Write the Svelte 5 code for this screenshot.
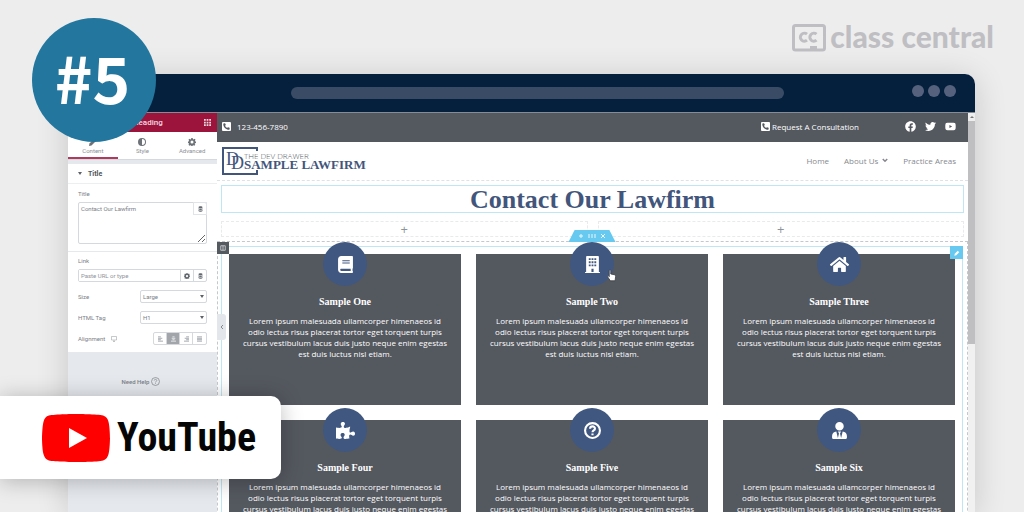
<script>
  const text =
    'Lorem ipsum malesuada ullamcorper himenaeos id odio lectus risus placerat tortor eget torquent turpis cursus vestibulum lacus duis justo neque enim egestas est duis luctus nisl etiam.';
  const cards = [
    { title: 'Sample One', icon: 'book' },
    { title: 'Sample Two', icon: 'building' },
    { title: 'Sample Three', icon: 'home' },
    { title: 'Sample Four', icon: 'puzzle' },
    { title: 'Sample Five', icon: 'question' },
    { title: 'Sample Six', icon: 'user' }
  ];
  const icons = {
    book: ['0 0 448 512', 'M448 360V24c0-13.3-10.7-24-24-24H96C43 0 0 43 0 96v320c0 53 43 96 96 96h328c13.3 0 24-10.7 24-24v-16c0-7.5-3.5-14.3-8.9-18.7-4.2-15.4-4.2-59.3 0-74.7 5.4-4.3 8.9-11.1 8.9-18.6zM128 134c0-3.3 2.7-6 6-6h212c3.3 0 6 2.7 6 6v20c0 3.3-2.7 6-6 6H134c-3.3 0-6-2.7-6-6v-20zm0 64c0-3.3 2.7-6 6-6h212c3.3 0 6 2.7 6 6v20c0 3.3-2.7 6-6 6H134c-3.3 0-6-2.7-6-6v-20zm253.4 250H96c-17.7 0-32-14.3-32-32 0-17.6 14.4-32 32-32h285.4c-1.9 17.1-1.9 46.9 0 64z'],
    building: ['0 0 448 512', 'M436 480h-20V24c0-13-11-24-24-24H56C43 0 32 11 32 24v456H12c-7 0-12 5-12 12v20h448v-20c0-7-5-12-12-12zM112 64h56v56h-56zM112 160h56v56h-56zM112 256h56v56h-56zM196 64h56v56h-56zM196 160h56v56h-56zM196 256h56v56h-56zM280 64h56v56h-56zM280 160h56v56h-56zM280 256h56v56h-56zM192 384h64v96h-64z'],
    home: ['0 0 576 512', 'M280.37 148.26L96 300.11V464a16 16 0 0 0 16 16l112.06-.29a16 16 0 0 0 15.92-16V368a16 16 0 0 1 16-16h64a16 16 0 0 1 16 16v95.64a16 16 0 0 0 16 16.05L464 480a16 16 0 0 0 16-16V300L295.67 148.26a12.19 12.19 0 0 0-15.3 0zM571.6 251.47L488 182.56V44.05a12 12 0 0 0-12-12h-56a12 12 0 0 0-12 12v72.61L318.47 43a48 48 0 0 0-61 0L4.34 251.47a12 12 0 0 0-1.6 16.9l25.5 31A12 12 0 0 0 45.15 301l235.22-193.74a12.19 12.19 0 0 1 15.3 0L530.9 301a12 12 0 0 0 16.9-1.6l25.5-31a12 12 0 0 0-1.7-16.93z'],
    puzzle: ['0 0 576 512', 'M519.442 288.651c-41.519 0-59.5 31.593-82.058 31.593C377.409 320.244 432 144 432 144s-196.288 80-196.288-3.297c0-35.827 36.288-46.25 36.288-85.985C272 19.216 243.885 0 210.539 0c-34.654 0-66.366 18.891-66.366 56.346 0 41.364 31.711 59.277 31.711 81.75C175.885 207.719 0 166.758 0 166.758v333.237s178.635 41.047 178.635-28.662c0-22.473-40-40.107-40-81.471 0-37.456 29.25-56.346 63.577-56.346 33.673 0 61.788 19.216 61.788 54.717 0 39.735-36.288 50.158-36.288 85.985 0 60.803 129.675 25.73 181.23 25.73 0 0-34.725-120.101 25.827-120.101 35.962 0 46.423 36.152 86.308 36.152C556.712 416 576 387.99 576 354.443c0-34.199-18.962-65.792-56.558-65.792z'],
    user: ['0 0 448 512', 'M224 256c70.7 0 128-57.3 128-128S294.7 0 224 0 96 57.3 96 128s57.3 128 128 128zm95.8 32.6L272 480l-32-136 32-56h-96l32 56-32 136-47.8-191.4C56.9 292 0 350.3 0 422.4V464c0 26.5 21.5 48 48 48h352c26.5 0 48-21.5 48-48v-41.6c0-72.1-56.9-130.4-128.2-133.8z'],
    phone: ['0 32 448 448', 'M400 32H48A48 48 0 0 0 0 80v352a48 48 0 0 0 48 48h352a48 48 0 0 0 48-48V80a48 48 0 0 0-48-48zm-16.39 307.37l-15 65A15 15 0 0 1 354 416C194 416 64 286.29 64 126a15.7 15.7 0 0 1 11.63-14.61l65-15A18.23 18.23 0 0 1 144 96a16.27 16.27 0 0 1 13.79 9.09l30 70A17.9 17.9 0 0 1 189 181a17 17 0 0 1-5.5 11.61l-37.89 31a231.91 231.91 0 0 0 110.78 110.78l31-37.89A17 17 0 0 1 299 291a17.85 17.85 0 0 1 5.91 1.21l70 30A16.25 16.25 0 0 1 384 336a17.41 17.41 0 0 1-.39 3.37z'],
    Facebook: ['0 0 512 512', 'M504 256C504 119 393 8 256 8S8 119 8 256c0 123.78 90.69 226.38 209.25 245V327.69h-63V256h63v-54.64c0-62.15 37-96.48 93.67-96.48 27.14 0 55.52 4.84 55.52 4.84v61h-31.28c-30.8 0-40.41 19.12-40.41 38.73V256h68.78l-11 71.69h-57.78V501C413.31 482.38 504 379.78 504 256z'],
    Twitter: ['0 0 512 512', 'M459.37 151.716c.325 4.548.325 9.097.325 13.645 0 138.72-105.583 298.558-298.558 298.558-59.452 0-114.68-17.219-161.137-47.106 8.447.974 16.568 1.299 25.34 1.299 49.055 0 94.213-16.568 130.274-44.832-46.132-.975-84.792-31.188-98.112-72.772 6.498.974 12.995 1.624 19.818 1.624 9.421 0 18.843-1.3 27.614-3.573-48.081-9.747-84.143-51.98-84.143-102.985v-1.299c13.969 7.797 30.214 12.67 47.431 13.319-28.264-18.843-46.781-51.005-46.781-87.391 0-19.492 5.197-37.36 14.294-52.954 51.655 63.675 129.3 105.258 216.365 109.807-1.624-7.797-2.599-15.918-2.599-24.04 0-57.828 46.782-104.934 104.934-104.934 30.213 0 57.502 12.67 76.67 33.137 23.715-4.548 46.456-13.32 66.599-25.34-7.798 24.366-24.366 44.833-46.132 57.827 21.117-2.273 41.584-8.122 60.426-16.243-14.292 20.791-32.161 39.308-52.628 54.253z'],
    YouTube: ['0 0 576 512', 'M549.655 124.083c-6.281-23.65-24.787-42.276-48.284-48.597C458.781 64 288 64 288 64S117.22 64 74.629 75.486c-23.497 6.322-42.003 24.947-48.284 48.597-11.412 42.867-11.412 132.305-11.412 132.305s0 89.438 11.412 132.305c6.281 23.65 24.787 41.5 48.284 47.821C117.22 448 288 448 288 448s170.78 0 213.371-11.486c23.497-6.321 42.003-24.171 48.284-47.821 11.412-42.867 11.412-132.305 11.412-132.305s0-89.438-11.412-132.305zm-317.51 213.508V175.185l142.739 81.205-142.739 81.201z']
  };
  const aligns = [
    { name: 'Left', d: 'M0 1h4M0 3h6M0 5h4M0 7h7' },
    { name: 'Center', d: 'M2 1h3M1 3h5M2 5h3M0 7h7' },
    { name: 'Right', d: 'M3 1h4M1 3h6M3 5h4M0 7h7' },
    { name: 'Justify', d: 'M0 1h7M0 3h7M0 5h7M0 7h7' }
  ];
  let align = $state('Center');
  let heading = $state('Contact Our Lawfirm');
</script>

{#snippet glyph(name)}
  <svg class="glyph" viewBox={icons[name][0]} aria-hidden="true"><path fill-rule="evenodd" d={icons[name][1]} /></svg>
{/snippet}

{#snippet gear()}
  <svg class="gear" viewBox="0 0 16 16" aria-hidden="true"><path fill-rule="evenodd" d="M6.6 0h2.8l.4 2.1 1.5.7L13.1 1.6l2 2-1.2 1.8.6 1.4 1.5.3v2.8l-2 .4-.6 1.5 1.2 1.8-2 2-1.8-1.2-1.4.6-.4 1H6.6l-.4-1-1.5-.6-1.8 1.2-2-2 1.2-1.8-.6-1.5L0 9.9V7.1l1.5-.3.6-1.4L.9 3.6l2-2 1.8 1.2 1.5-.7zM8 5a3 3 0 1 0 0 6 3 3 0 0 0 0-6z" /></svg>
{/snippet}

{#snippet stack()}
  <svg class="stack" viewBox="0 0 10 12" aria-hidden="true"><path d="M1 2.5C1 0 9 0 9 2.500S1 5 1 2.500zM1 4.500c2 1.500 6 1.500 8 0V7C7 8.300 3 8.300 1 7zM1 8c2 1.500 6 1.500 8 0v2c-1 2-7 2-8 0z" /></svg>
{/snippet}

<div class="page">
  <div class="brand">
    <svg class="brand-mark" viewBox="0 0 34 28" aria-hidden="true">
      <rect x="1.500" y="1.500" width="31" height="24.500" rx="2" />
      <path d="M15 10.200a4 4 0 1 0 0 6M24.500 10.200a4 4 0 1 0 0 6" />
      <path class="solid" d="M18 22h7v4h-7z" />
    </svg>
    <span>class central</span>
  </div>

  <div class="window">
    <div class="chrome">
      <div class="address"></div>
      <div class="dots"><i></i><i></i><i></i></div>
    </div>

    <div class="screen">
      <aside>
        <header class="panel-head">
          <span>Edit Heading</span>
          <svg viewBox="0 0 8 8" aria-hidden="true"><path d="M0 0h2v2H0zM3 0h2v2H3zM6 0h2v2H6zM0 3h2v2H0zM3 3h2v2H3zM6 3h2v2H6zM0 6h2v2H0zM3 6h2v2H3zM6 6h2v2H6z" /></svg>
        </header>
        <nav class="tabs" aria-label="Panel">
          <button class="on"><svg viewBox="0 0 16 16" aria-hidden="true"><path d="M0 16l1-5L11 1l4 4L5 15z" /></svg>Content</button>
          <button><svg viewBox="0 0 16 16" aria-hidden="true"><path fill-rule="evenodd" d="M8 0a8 8 0 1 0 0 16A8 8 0 0 0 8 0zm0 2a6 6 0 0 1 0 12z" /></svg>Style</button>
          <button>{@render gear()}Advanced</button>
        </nav>
        <div class="panel-title"><i class="caret"></i>Title</div>
        <div class="group">
          <label for="title">Title</label>
          <div class="area">
            <textarea id="title" bind:value={heading}></textarea>
            <button aria-label="Dynamic title">{@render stack()}</button>
          </div>
        </div>
        <div class="group fields">
          <div class="link">
            <label for="link">Link</label>
            <div class="link-box">
              <input id="link" placeholder="Paste URL or type" />
              <button aria-label="Link options">{@render gear()}</button>
              <button aria-label="Dynamic link">{@render stack()}</button>
            </div>
          </div>
          <div class="field">
            <label for="size">Size</label>
            <div class="select"><select id="size"><option>Large</option></select><i class="caret"></i></div>
          </div>
          <div class="field">
            <label for="tag">HTML Tag</label>
            <div class="select"><select id="tag"><option>H1</option></select><i class="caret"></i></div>
          </div>
          <div class="field">
            <span class="with-icon">Alignment
              <svg viewBox="0 0 12 12" aria-hidden="true"><path d="M1 1h10v7H1zM4 11h4M6 8v3" /></svg>
            </span>
            <div class="aligns">
              {#each aligns as a}
                <button class:on={align === a.name} aria-label={a.name} onclick={() => (align = a.name)}>
                  <svg viewBox="0 0 7 8" aria-hidden="true"><path d={a.d} /></svg>
                </button>
              {/each}
            </div>
          </div>
        </div>
        <a class="help" href="#help">Need Help
          <svg viewBox="0 0 12 12" aria-hidden="true"><circle cx="6" cy="6" r="5.300" /><path d="M4.300 4.700C4.300 2.500 7.800 2.600 7.700 4.700 7.600 6 6 5.800 6 7.300M6 8.300v1" /></svg>
        </a>
      </aside>

      <main>
        <div class="topbar">
          <a href="#phone">{@render glyph('phone')}<span class="number">123-456-7890</span></a>
          <a class="request" href="#consult">{@render glyph('phone')}Request A Consultation</a>
          <div class="social">
            {#each ['Facebook', 'Twitter', 'YouTube'] as s}
              <a href="#social" aria-label={s}>{@render glyph(s)}</a>
            {/each}
          </div>
        </div>

        <div class="site-head">
          <div class="logo">
            <svg viewBox="0 0 36 28" aria-hidden="true"><path d="M35 8V1H1v26h34v-4" /></svg>
            <span class="mono"><b>D</b><b>D</b></span>
            <span class="logo-text"><small>THE DEV DRAWER</small><strong>SAMPLE LAWFIRM</strong></span>
          </div>
          <nav class="menu" aria-label="Site">
            <a href="#home">Home</a>
            <a href="#about">About Us <svg viewBox="0 0 8 6" aria-hidden="true"><path d="M1 1l3 3 3-3" /></svg></a>
            <a href="#areas">Practice Areas</a>
          </nav>
        </div>

        <div class="hero">
          <h1>{heading}</h1>
          <div class="slots"><button aria-label="Add left">+</button><button aria-label="Add right">+</button></div>
        </div>

        <section>
          <div class="handle">
            <svg viewBox="0 0 26 8" aria-hidden="true"><path d="M0 4h4M2 2v4M10 2v4M13 2v4M16 2v4M22 2l4 4M26 2l-4 4" /></svg>
          </div>
          <div class="column-tag"><svg viewBox="0 0 8 8" aria-hidden="true"><path d="M1 1h6v6H1zM4 1v6" /></svg></div>
          <div class="collapse"><svg viewBox="0 0 4 6" aria-hidden="true"><path d="M3 1L1 3l2 2" /></svg></div>
          <button class="edit" aria-label="Edit"><svg viewBox="0 0 16 16" aria-hidden="true"><path d="M1 15l1-5 8-8 4 4-8 8z" /></svg></button>
          <div class="cards">
            {#each cards as c}
              <article>
                <div class="disc">
                  {#if c.icon === 'question'}
                    <svg class="question" viewBox="0 0 16 16" aria-hidden="true"><circle cx="8" cy="8" r="7" /><path d="M5.700 6.300C5.800 3.300 10.400 3.500 10.300 6.200 10.200 8 8 7.700 8 9.600M8 10.800v1.600" /></svg>
                  {:else}
                    {@render glyph(c.icon)}
                  {/if}
                </div>
                <h2>{c.title}</h2>
                <p>{text}</p>
              </article>
            {/each}
          </div>
          <svg class="pointer" viewBox="0 0 12 16" aria-hidden="true"><path d="M3 1.500c0-1 2-1 2 0V6l5 1c1 .2 1.500 1 1.500 2l-.7 6H4.500L1 10c-.8-1.300.6-2 1.300-1.300L3 9.500z" /></svg>
        </section>
      </main>

      <div class="scroll"><i></i><b></b></div>
    </div>
  </div>

  <div class="rank">#5</div>

  <div class="video">
    <svg viewBox="0 0 68 48" aria-hidden="true"><path fill="#f00" d="M66.500 7.700c-.8-2.900-2.500-5.400-5.400-6.200C55.800.1 34 0 34 0S12.200.1 6.900 1.600C4 2.300 2.300 4.800 1.500 7.700.1 13 0 24 0 24s.1 11 1.500 16.300c.8 2.900 2.500 5.400 5.400 6.200C12.200 47.900 34 48 34 48s21.800-.1 27.100-1.600c2.900-.7 4.600-3.200 5.400-6.100C67.900 35 68 24 68 24s-.1-11-1.500-16.300z" /><path fill="#fff" d="M45 24L27 14v20" /></svg>
    <span>YouTube</span>
  </div>
</div>

<style>
  :global(body) { margin: 0; }
  .page, .page :global(*) { box-sizing: border-box; }
  .page {
    position: relative;
    height: 100vh;
    overflow: hidden;
    display: flex;
    flex-direction: column;
    background: #ededed;
    font-family: Roboto, sans-serif;
  }
  a { color: inherit; text-decoration: none; }
  button { font: inherit; color: inherit; background: none; border: 0; padding: 0; margin: 0; }
  svg { display: block; flex: none; }

  .brand {
    height: 74px;
    flex: none;
    display: flex;
    justify-content: flex-end;
    align-items: center;
    gap: 4px;
    padding: 0 30px 2px 0;
    color: #bfbfc3;
    font: 900 30px/36px Lato, sans-serif;
  }
  .brand-mark { width: 34px; height: 28px; margin-top: 3px; fill: none; stroke: #bfbfc3; stroke-width: 3; }
  .brand-mark .solid { fill: #bfbfc3; stroke: none; }

  .window {
    flex: 1;
    min-height: 0;
    margin: 0 49px 0 68px;
    display: flex;
    flex-direction: column;
    border-radius: 10px 10px 0 0;
    box-shadow: 0 4px 32px rgba(0, 0, 0, .16);
    overflow: hidden;
  }
  .chrome {
    height: 38px;
    flex: none;
    display: flex;
    justify-content: space-between;
    align-items: center;
    padding: 0 19px 0 223px;
    background: #05203d;
  }
  .address { flex: 1; margin-right: 128px; height: 12px; border-radius: 6px; background: #3a4c65; }
  .dots { display: flex; gap: 4px; padding-bottom: 4px; }
  .dots i { width: 12px; height: 12px; border-radius: 50%; background: #56627d; }

  .screen {
    flex: 1;
    min-height: 0;
    display: grid;
    grid-template-columns: 149px 1fr 7px;
    border-top: 1px solid #868c95;
    background: #fff;
  }

  aside { background: #e5e8ed; color: #7b8086; font-size: 6px; line-height: 8px; min-height: 0; }
  .panel-head {
    height: 19px;
    display: flex;
    align-items: center;
    justify-content: center;
    position: relative;
    padding-right: 5px;
    background: #9c133c;
    color: #f3dbe2;
    font-size: 8px;
    font-weight: 500;
  }
  .panel-head svg { position: absolute; right: 6px; width: 7px; height: 7px; fill: #f3dbe2; }
  .tabs { display: grid; grid-template-columns: repeat(3, 1fr); height: 28px; background: #fff; border-bottom: 1px solid #d5d8dd; }
  .tabs button { display: flex; flex-direction: column; align-items: center; gap: 1px; padding-top: 6px; color: #8b9096; border-bottom: 2px solid transparent; line-height: 8px; }
  .tabs button.on { border-bottom-color: #b13a5c; }
  .tabs svg { width: 8px; height: 8px; fill: #6d7278; }
  .panel-title {
    display: flex;
    align-items: center;
    gap: 6px;
    height: 20px;
    margin-top: 4px;
    padding-left: 10px;
    background: #fff;
    border-bottom: 1px solid #eceef0;
    color: #4f555b;
    font-size: 7px;
    font-weight: 700;
  }
  .caret { width: 0; height: 0; border: 2px solid transparent; border-top: 3px solid #5b6167; border-bottom: 0; }
  .group { background: #fff; padding: 6px 10px 7px; border-bottom: 1px solid #e6e9ec; }
  .area { position: relative; margin-top: 4px; height: 42px; display: flex; }
  textarea {
    flex: 1;
    min-width: 0;
    resize: vertical;
    padding: 2px;
    border: 1px solid #d5d8dc;
    border-radius: 2px;
    color: #7b8086;
    font: 6px/8px Roboto, sans-serif;
  }
  .area button { position: absolute; right: 0; top: 0; width: 14px; height: 13px; display: grid; place-items: center; border: 1px solid #e1e4e8; }
  .stack { width: 5px; height: 6px; fill: #62686e; }
  .gear { width: 6px; height: 6px; fill: #62686e; }
  .fields { display: flex; flex-direction: column; gap: 8px; padding: 5px 10px 7px; border: 0; }
  .link-box { display: flex; margin-top: 4px; height: 13px; border: 1px solid #d5d8dc; border-radius: 2px; }
  input { flex: 1; min-width: 0; border: 0; padding: 0 2px; font: 6px/8px Roboto, sans-serif; }
  input::placeholder { color: #8f949a; }
  .link-box button { width: 13px; display: grid; place-items: center; border-left: 1px solid #d5d8dc; }
  .field { display: flex; justify-content: space-between; align-items: center; height: 13px; }
  .select { position: relative; width: 67px; height: 13px; display: flex; }
  select { appearance: none; flex: 1; padding: 0 2px; background: #fff; border: 1px solid #d5d8dc; border-radius: 2px; color: #7b8086; font: 6px/8px Roboto, sans-serif; }
  .select .caret { position: absolute; right: 3px; top: 5px; }
  .with-icon { display: flex; align-items: center; gap: 6px; }
  .with-icon svg { width: 6px; height: 6px; fill: none; stroke: #8f949a; }
  .aligns { display: grid; grid-template-columns: repeat(4, 1fr); width: 54px; height: 13px; border: 1px solid #d5d8dc; border-radius: 2px; }
  .aligns button { display: grid; place-items: center; border-right: 1px solid #d5d8dc; }
  .aligns button:last-child { border: 0; }
  .aligns button.on { background: #a2a6ab; }
  .aligns svg { width: 5px; height: 6px; fill: none; stroke: #85898f; }
  .aligns .on svg { stroke: #fff; }
  .help { display: flex; justify-content: center; align-items: center; gap: 2px; padding: 25px 3px 0 0; font-weight: 500; }
  .help svg { width: 9px; height: 9px; fill: none; stroke: #85898f; }

  main { min-width: 0; min-height: 0; position: relative; overflow: hidden; background: #fff; font-family: 'Open Sans', sans-serif; }
  .glyph { fill: #fff; }
  .topbar {
    display: flex;
    align-items: center;
    height: 29px;
    padding: 0 12px 2px 5px;
    background: #54585f;
    color: #fff;
    font-size: 8px;
    line-height: 11px;
  }
  .topbar a { display: flex; align-items: center; gap: 2px; }
  .topbar .glyph { width: 9px; height: 9px; }
  .number { margin-left: 4px; }
  .topbar .request { margin-left: auto; }
  .social { display: flex; gap: 9px; margin-left: 46px; }
  .topbar .social .glyph { width: 11px; height: 11px; }

  .site-head {
    display: flex;
    justify-content: space-between;
    align-items: center;
    height: 39px;
    padding: 0 12px 1px 5px;
    border-bottom: 1px dashed #dfe2e5;
  }
  .logo { position: relative; display: flex; align-items: center; color: #42567c; }
  .logo svg { width: 36px; height: 28px; fill: none; stroke: #42567c; stroke-width: 2; }
  .logo svg path { stroke-dasharray: none; }
  .mono { position: absolute; left: 4px; top: 4px; display: flex; font: 18px/16px 'Liberation Serif', serif; }
  .mono b { font-weight: 400; }
  .mono b + b { margin: 4px 0 0 -8px; }
  .logo-text { display: flex; flex-direction: column; margin-left: -14px; background: #fff; background-clip: content-box; }
  .logo-text small { font: 300 8px/9px 'Open Sans', sans-serif; color: #555b65; }
  .logo-text strong { font: 700 13px/10px 'Liberation Serif', serif; }
  .mono { z-index: 1; }
  .menu { display: flex; gap: 15px; color: #85898f; font-size: 8px; line-height: 11px; }
  .menu a { display: flex; align-items: center; gap: 4px; }
  .menu svg { width: 6px; height: 5px; fill: none; stroke: #85898f; stroke-width: 2; }

  .hero { padding: 4px 4px 4px; }
  h1 { margin: 0; height: 28px; border: 1px solid #bfe6f3; text-align: center; color: #42567c; font: 700 26px/27px 'Liberation Serif', serif; }
  .slots { display: grid; grid-template-columns: 1fr 1fr; gap: 10px; margin-top: 8px; }
  .slots button { height: 16px; border: 1px dashed #e8eaec; color: #8f949a; font-size: 13px; line-height: 12px; }

  section { position: relative; padding: 4px 4px 0 3px; border: 1px dashed #c4c8cc; border-bottom: 0; }
  .cards {
    display: grid;
    grid-template-columns: repeat(3, 1fr);
    gap: 15px;
    padding: 7px 7px 0;
    border: 1px solid #bfe6f3;
    border-width: 1px 1px 0;
  }
  article { height: 151px; display: flex; flex-direction: column; align-items: center; padding: 0 12px; background: #54585f; color: #fff; }
  .disc { flex: none; width: 44px; height: 44px; margin-top: -12px; display: grid; place-items: center; border-radius: 50%; background: #40577f; }
  .disc svg { width: 19px; height: 17px; }
  .question { fill: none; stroke: #fff; stroke-width: 2; }
  h2 { margin: 10px 0 0; font: 700 10px/12px 'Liberation Serif', serif; }
  p { margin: 7px 0 0; text-align: center; font-size: 8px; line-height: 11px; }
  .handle { position: absolute; left: 50%; top: -12px; width: 47px; height: 12px; margin-left: -24px; display: grid; place-items: center; background: #68c9f0; clip-path: polygon(13% 0, 87% 0, 100% 100%, 0 100%); }
  .handle svg { width: 28px; height: 8px; fill: none; stroke: #e8f8fe; }
  .column-tag { position: absolute; left: -1px; top: 0; width: 12px; height: 12px; display: grid; place-items: center; background: #555a60; }
  .column-tag svg { width: 6px; height: 6px; fill: none; stroke: #dfe2e5; }
  .collapse { position: absolute; left: -1px; top: 72px; width: 9px; height: 26px; display: grid; place-items: center; background: #e3e6ea; border-radius: 0 3px 3px 0; }
  .collapse svg { width: 4px; height: 6px; fill: none; stroke: #85898f; }
  .edit { position: absolute; right: 4px; top: 4px; width: 13px; height: 13px; display: grid; place-items: center; background: #68c9f0; }
  .edit svg { width: 6px; height: 6px; fill: #fff; }
  .pointer { position: absolute; left: calc(50% + 14px); top: 27px; width: 9px; height: 13px; fill: #fff; stroke: #33373d; }

  .scroll { background: #f1f1f2; }
  .scroll i { display: block; height: 8px; background: #eee; }
  .scroll i::after { content: ''; display: block; width: 0; margin: auto; border: 2px solid transparent; border-top: 3px solid transparent; border-bottom: 2px solid #777; }
  .scroll b { display: block; height: 223px; background: #bfbfc2; }

  .rank {
    position: absolute;
    left: 32px;
    top: 18px;
    width: 124px;
    height: 124px;
    padding-right: 3px;
    border-radius: 50%;
    background: #23769d;
    color: #fff;
    text-align: center;
    font: 700 64px/116px 'Noto Sans CJK SC', sans-serif;
  }
  .video {
    position: absolute;
    left: 0;
    top: 396px;
    width: 281px;
    height: 83px;
    display: flex;
    align-items: center;
    gap: 7px;
    padding-left: 42px;
    background: #fff;
    border-radius: 0 10px 10px 0;
    box-shadow: 0 2px 22px rgba(0, 0, 0, .26);
    color: #050505;
    font: 700 40px/48px 'Roboto Condensed', 'Liberation Sans Narrow', Roboto, sans-serif;
  }
  .video svg { width: 68px; height: 48px; }
</style>
